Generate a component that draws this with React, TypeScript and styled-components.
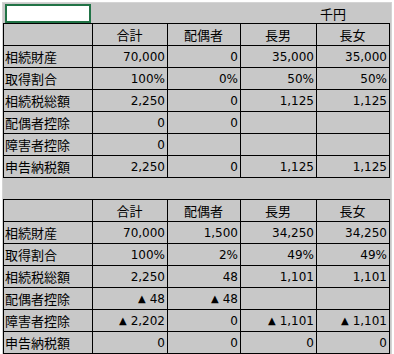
import React from "react";
import styled, { createGlobalStyle } from "styled-components";

const GlobalStyle = createGlobalStyle`
  body {
    margin: 0;
    background: #ffffff;
  }
`;

const COLS = "89px 75px 73px 76px 73px";

const Frame = styled.div`
  margin: 2px 0 0 2px;
  width: 388px;
  height: 360px;
  border: 1px solid #d4d4d4;
  border-bottom: none;
  background: #c8c8c8;
  color: #000;
`;

const TopBar = styled.div`
  display: grid;
  grid-template-columns: ${COLS};
  height: 20px;
  padding-left: 1px;
`;

const SelectedCell = styled.div`
  margin: 1px 0 0 1px;
  width: 82px;
  height: 15px;
  border: 2px solid #217346;
  background: #ffffff;
`;

const Unit = styled.div`
  grid-column: 5;
  padding: 1px 0 0 3px;
  font-family: "Noto Sans CJK JP", sans-serif;
  font-size: 13px;
  line-height: 19px;
`;

const Table = styled.div`
  display: grid;
  grid-template-columns: ${COLS};
  width: 386px;
  border-left: 1px solid #000;
  border-top: 1px solid #000;
`;

const Cell = styled.div<{ $align?: "left" | "center" | "right" }>`
  display: flex;
  align-items: center;
  justify-content: ${({ $align }) =>
    $align === "center" ? "center" : $align === "right" ? "flex-end" : "flex-start"};
  height: 21px;
  padding: 0 2px 0 1px;
  border-right: 1px solid #000;
  border-bottom: 1px solid #000;
  white-space: nowrap;
  overflow: hidden;
`;

const Label = styled(Cell)`
  font-family: "Noto Sans CJK JP", sans-serif;
  font-size: 13px;
`;

const Head = styled(Cell)`
  font-family: "Noto Sans CJK JP", sans-serif;
  font-size: 13px;
`;

const Num = styled(Cell)`
  font-family: "DejaVu Sans", sans-serif;
  font-size: 12px;
`;

const Tri = styled.span`
  font-size: 10px;
  margin-right: 4px;
`;

const Gap = styled.div`
  height: 21px;
`;

const people = ["合計", "配偶者", "長男", "長女"];

const before = [
  { label: "相続財産", values: ["70,000", "0", "35,000", "35,000"] },
  { label: "取得割合", values: ["100%", "0%", "50%", "50%"] },
  { label: "相続税総額", values: ["2,250", "0", "1,125", "1,125"] },
  { label: "配偶者控除", values: ["0", "0", "", ""] },
  { label: "障害者控除", values: ["0", "", "", ""] },
  { label: "申告納税額", values: ["2,250", "0", "1,125", "1,125"] },
];

const after = [
  { label: "相続財産", values: ["70,000", "1,500", "34,250", "34,250"] },
  { label: "取得割合", values: ["100%", "2%", "49%", "49%"] },
  { label: "相続税総額", values: ["2,250", "48", "1,101", "1,101"] },
  { label: "配偶者控除", values: ["-48", "-48", "", ""] },
  { label: "障害者控除", values: ["-2,202", "0", "-1,101", "-1,101"] },
  { label: "申告納税額", values: ["0", "0", "0", "0"] },
];

// negatives are shown with a black triangle, as in the sheet
const Value = ({ value }: { value: string }) =>
  value.startsWith("-") ? (
    <>
      <Tri>▲</Tri>
      {value.slice(1)}
    </>
  ) : (
    <>{value}</>
  );

const TaxTable = ({ rows }: { rows: { label: string; values: string[] }[] }) => (
  <Table>
    <Head />
    {people.map((name) => (
      <Head key={name} $align="center">
        {name}
      </Head>
    ))}
    {rows.map(({ label, values }) => (
      <React.Fragment key={label}>
        <Label>{label}</Label>
        {values.map((v, i) => (
          <Num key={i} $align="right">
            <Value value={v} />
          </Num>
        ))}
      </React.Fragment>
    ))}
  </Table>
);

const App = () => (
  <>
    <GlobalStyle />
    <Frame>
      <TopBar>
        <SelectedCell />
        <Unit>千円</Unit>
      </TopBar>
      <TaxTable rows={before} />
      <Gap />
      <TaxTable rows={after} />
    </Frame>
  </>
);

export default App;
